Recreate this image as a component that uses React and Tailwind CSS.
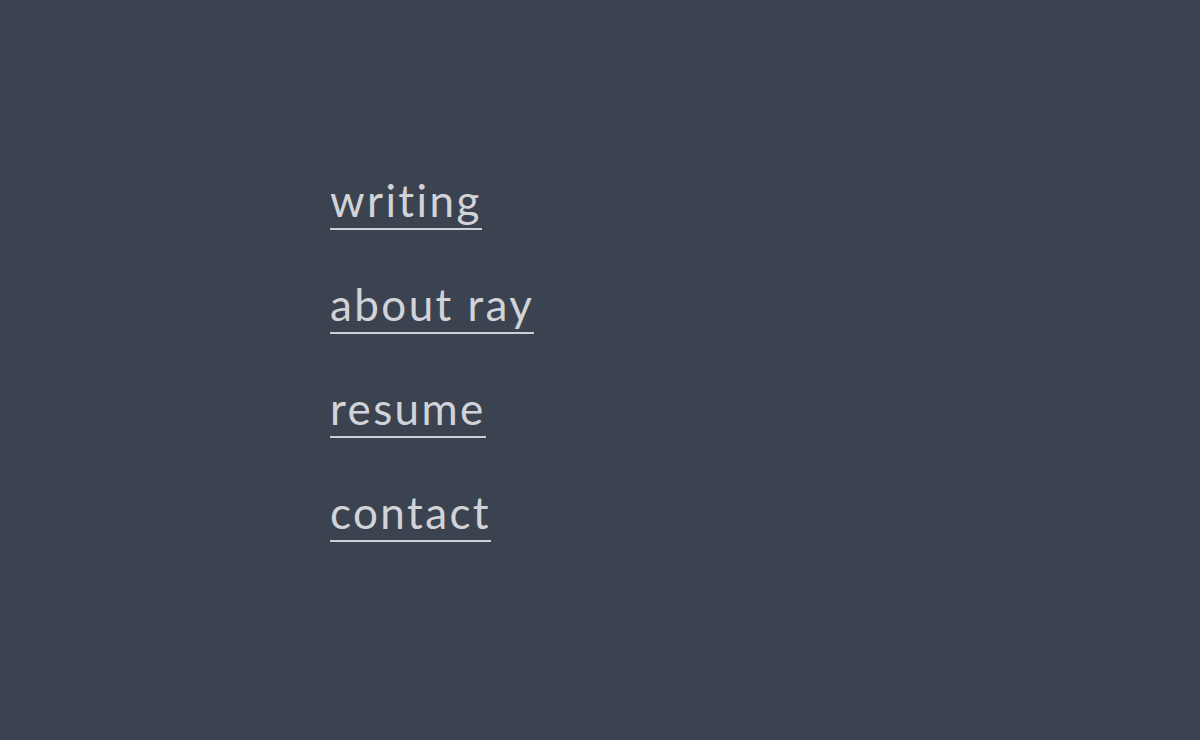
export default function App() {
  const links = ['writing', 'about ray', 'resume', 'contact'];
  return (
    <div className="min-h-[740px] bg-[#3c4350] pl-[330px] pt-[172px] font-['Lato',sans-serif]">
      <ul className="flex flex-col gap-[44px]">
        {links.map((l) => (
          <li key={l} className="h-[60px]">
            <a href="#" className="inline-block border-b-2 border-[#cfd0d6] text-[44px] font-normal leading-[56px] tracking-[2.4px] text-[#d2d3d8]">
              {l}
            </a>
          </li>
        ))}
      </ul>
    </div>
  );
}
